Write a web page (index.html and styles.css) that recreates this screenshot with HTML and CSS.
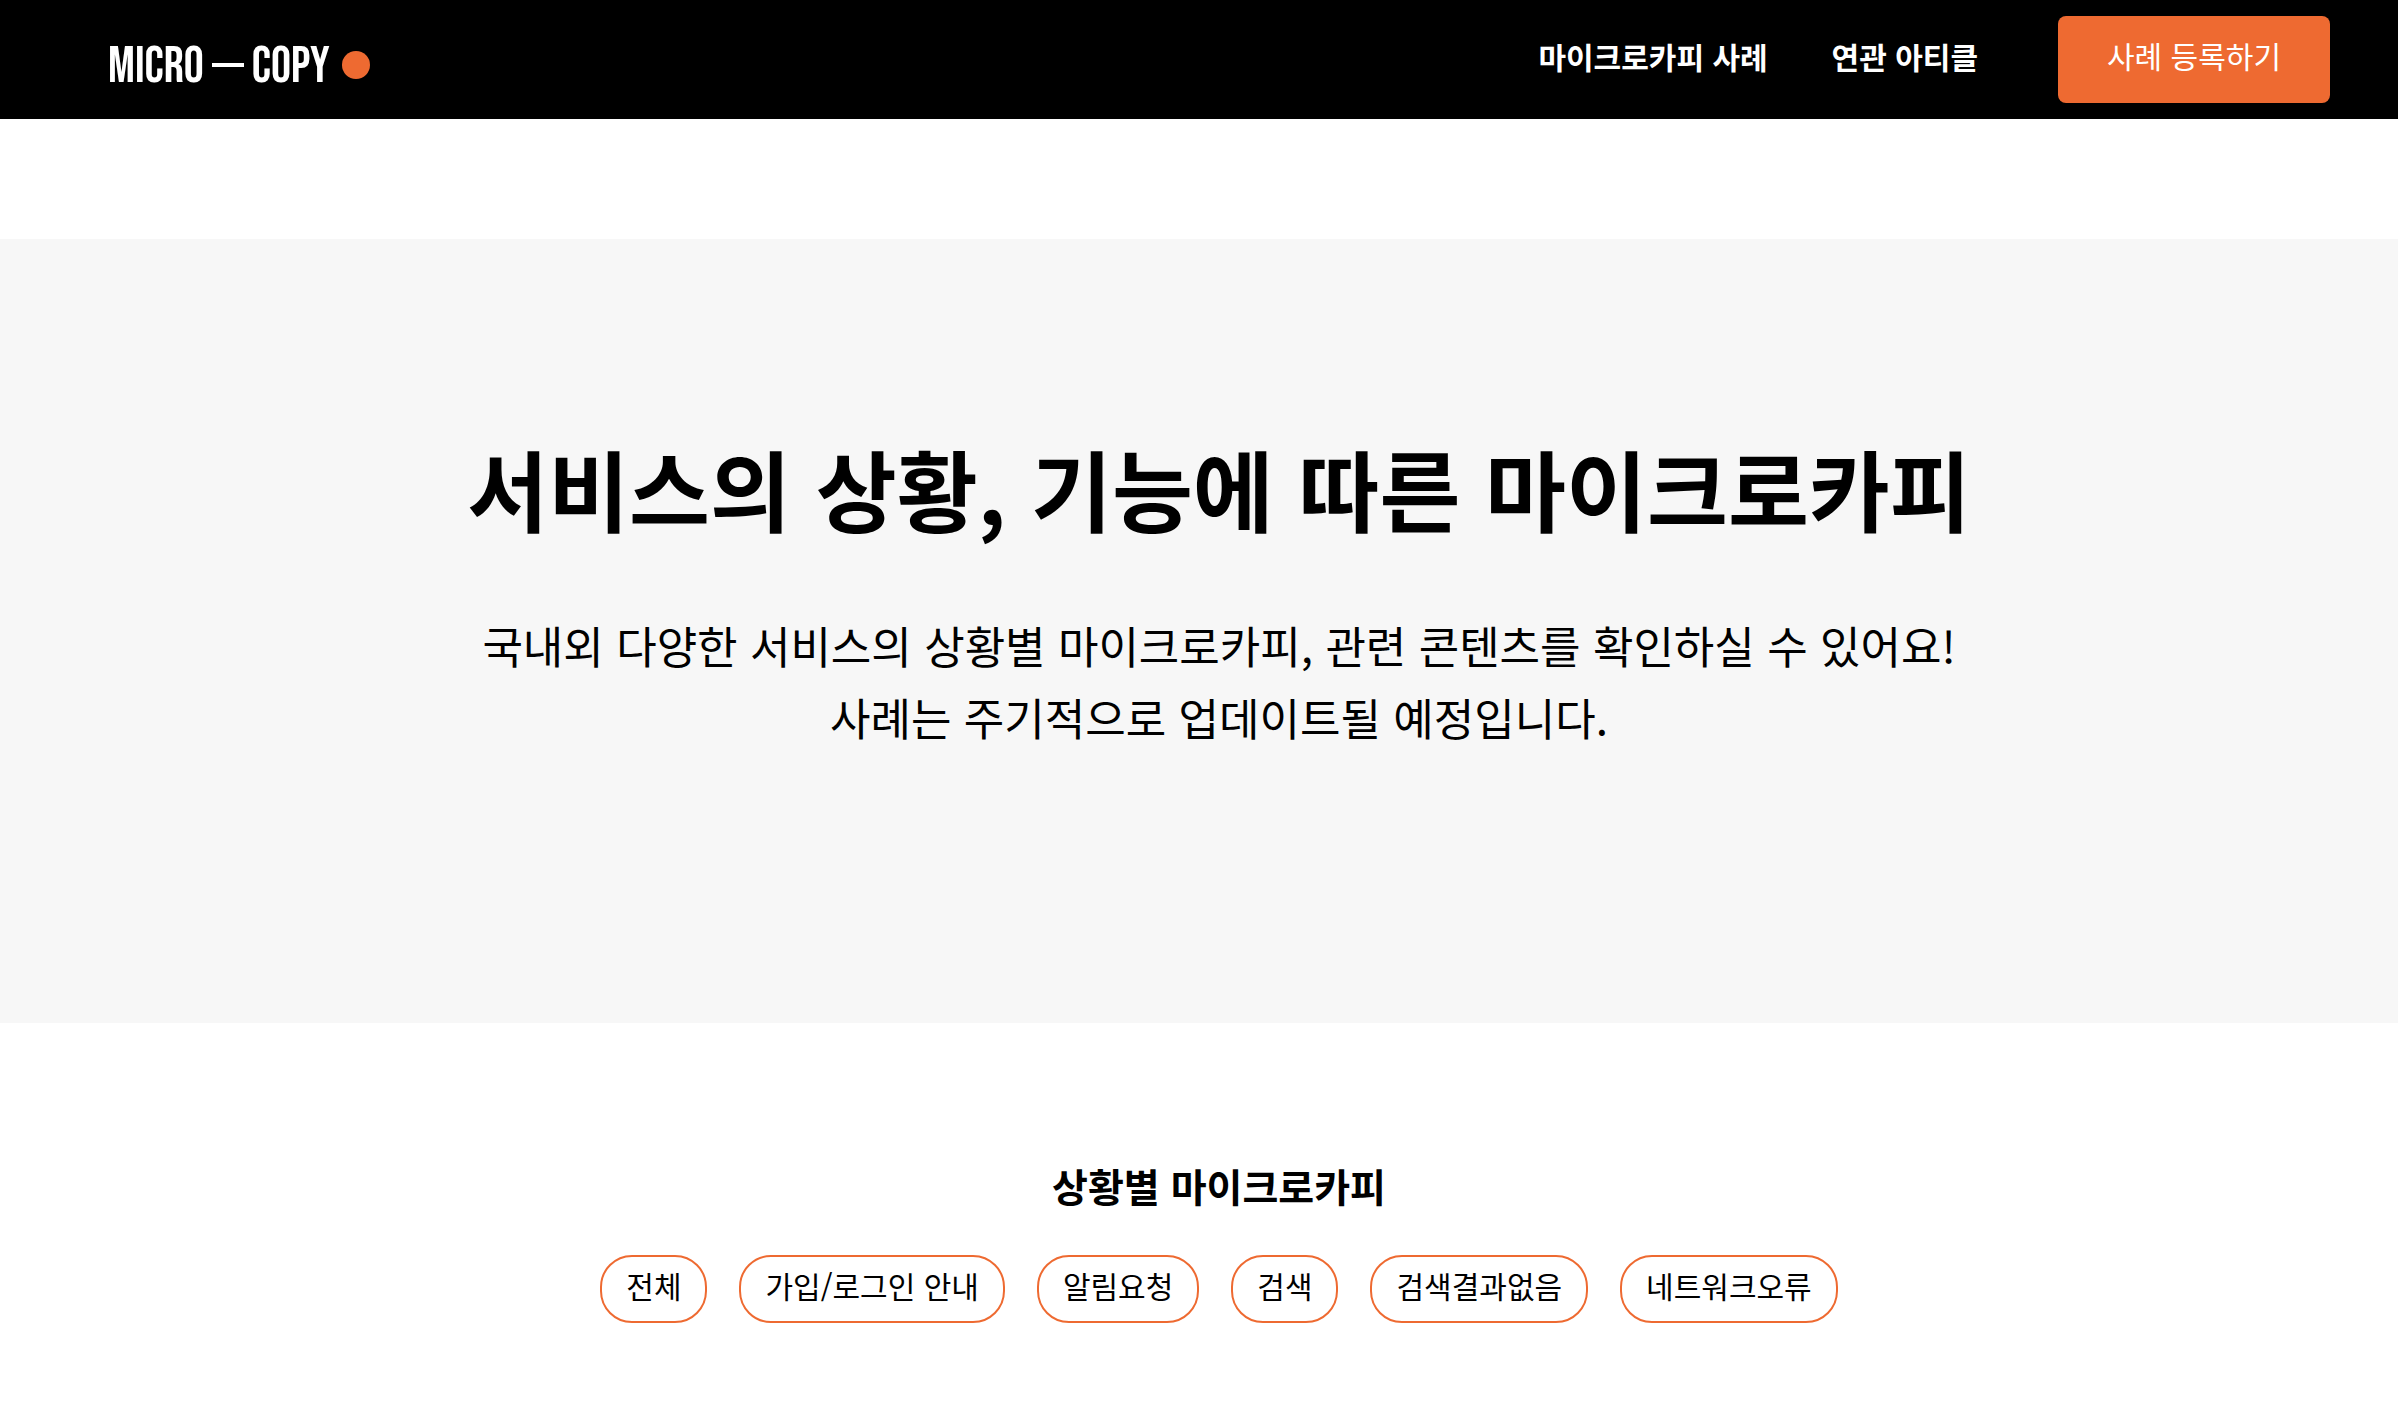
FILE: index.html
```html
<!DOCTYPE html>
<html lang="ko">
<head>
    <meta charset="UTF-8">
    <meta name="viewport" content="width=device-width, initial-scale=1.0">
    <title>MICRO — COPY</title>
    <link rel="stylesheet" href="styles.css">
</head>
<body>
    <header class="header">
        <a class="logo" href="#">
            <span class="logo-word">MICRO</span>
            <span class="logo-dash"></span>
            <span class="logo-word">COPY</span>
            <span class="logo-dot"></span>
        </a>
        <nav class="nav">
            <a class="nav-link" href="#cases">마이크로카피 사례</a>
            <a class="nav-link" href="#articles">연관 아티클</a>
            <button class="register-button" type="button">사례 등록하기</button>
        </nav>
    </header>

    <main>
        <section class="hero">
            <h1>서비스의 상황, 기능에 따른 마이크로카피</h1>
            <p>국내외 다양한 서비스의 상황별 마이크로카피, 관련 콘텐츠를 확인하실 수 있어요!<br>사례는 주기적으로 업데이트될 예정입니다.</p>
        </section>

        <section class="cases" id="cases">
            <h2>상황별 마이크로카피</h2>
            <div class="filters">
                <button class="filter" type="button">전체</button>
                <button class="filter" type="button">가입/로그인 안내</button>
                <button class="filter" type="button">알림요청</button>
                <button class="filter" type="button">검색</button>
                <button class="filter" type="button">검색결과없음</button>
                <button class="filter" type="button">네트워크오류</button>
            </div>
        </section>
    </main>
</body>
</html>
```
FILE: styles.css
```css
:root {
    --primary-color: #ee6a31;
    --text-color: #000;
    --hero-color: #f7f7f7;
}

* {
    box-sizing: border-box;
}

body {
    margin: 0;
    font-family: "Noto Sans CJK KR", sans-serif;
    color: var(--text-color);
    background-color: #fff;
}

button {
    font-family: inherit;
    cursor: pointer;
}

.header {
    display: flex;
    justify-content: space-between;
    align-items: center;
    padding: 16px 68px 16px 108px;
    background-color: #000;
}

.logo {
    display: flex;
    align-items: center;
    gap: 8px;
    margin-top: 10px;
    color: #fff;
    font-family: "Bebas Neue", "Liberation Sans Narrow", sans-serif;
    font-size: 50px;
    line-height: 56px;
    text-decoration: none;
}

.logo-word {
    padding-top: 4px;
}

.logo-dash {
    width: 32px;
    height: 4px;
    background-color: #fff;
}

.logo-dot {
    width: 28px;
    height: 28px;
    margin-left: 4px;
    border-radius: 50%;
    background-color: var(--primary-color);
}

.nav {
    display: flex;
    align-items: center;
}

.nav-link {
    margin-right: 64px;
    padding-bottom: 8px;
    color: #fff;
    font-size: 30px;
    font-weight: 700;
    line-height: 44px;
    text-decoration: none;
}

.register-button {
    min-width: 272px;
    margin-left: 16px;
    padding: 18px 48px 26px;
    border: none;
    border-radius: 8px;
    background-color: var(--primary-color);
    color: #fff;
    font-size: 30px;
    line-height: 43px;
}

.hero {
    margin-top: 120px;
    padding: 182px 0 270px 40px;
    background-color: var(--hero-color);
    text-align: center;
}

.hero h1 {
    margin: 0 0 56px;
    font-size: 88px;
    line-height: 132px;
}

.hero p {
    margin: 0;
    font-size: 44px;
    line-height: 72px;
}

.cases {
    padding: 134px 0 80px 40px;
    text-align: center;
}

.cases h2 {
    margin: 0 0 42px;
    font-size: 39px;
    line-height: 56px;
}

.filters {
    display: flex;
    flex-wrap: wrap;
    justify-content: center;
    gap: 32px;
}

.filter {
    padding: 6px 24px 14px;
    border: 2px solid var(--primary-color);
    border-radius: 32px;
    background-color: #fff;
    color: var(--text-color);
    font-size: 30px;
    line-height: 44px;
}
```
